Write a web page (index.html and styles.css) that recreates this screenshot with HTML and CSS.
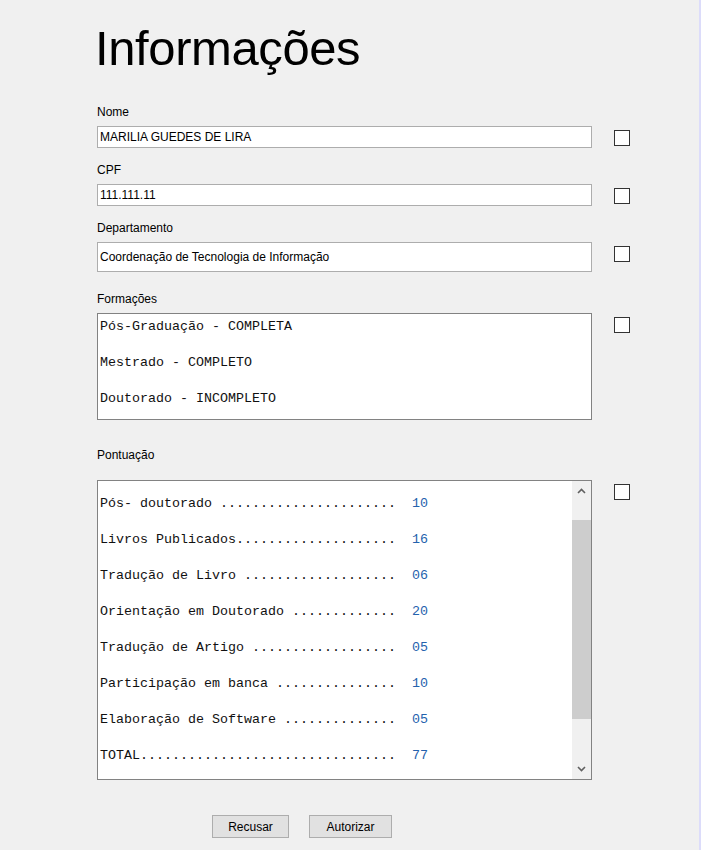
FILE: index.html
```html
<!DOCTYPE html>
<html lang="pt-BR">
<head>
<meta charset="utf-8">
<title>Informações</title>
<link rel="stylesheet" href="styles.css">
</head>
<body>
<div class="window">
  <h1 class="title">Informações</h1>

  <div class="field f-nome">
    <div class="label">Nome</div>
    <div class="row">
      <div class="input">MARILIA GUEDES DE LIRA</div>
      <input type="checkbox" class="check">
    </div>
  </div>

  <div class="field f-cpf">
    <div class="label">CPF</div>
    <div class="row">
      <div class="input">111.111.11</div>
      <input type="checkbox" class="check">
    </div>
  </div>

  <div class="field f-dep">
    <div class="label">Departamento</div>
    <div class="row">
      <div class="input tall">Coordenação de Tecnologia de Informação</div>
      <input type="checkbox" class="check">
    </div>
  </div>

  <div class="field f-form">
    <div class="label">Formações</div>
    <div class="row">
      <div class="area area-form">
        <p>Pós-Graduação - COMPLETA</p>
        <p>Mestrado - COMPLETO</p>
        <p>Doutorado - INCOMPLETO</p>
      </div>
      <input type="checkbox" class="check">
    </div>
  </div>

  <div class="field f-pont">
    <div class="label">Pontuação</div>
    <div class="row">
      <div class="area area-pont">
        <div class="lines">
          <p>Pós- doutorado ......................  <span class="num">10</span></p>
          <p>Livros Publicados....................  <span class="num">16</span></p>
          <p>Tradução de Livro ...................  <span class="num">06</span></p>
          <p>Orientação em Doutorado .............  <span class="num">20</span></p>
          <p>Tradução de Artigo ..................  <span class="num">05</span></p>
          <p>Participação em banca ...............  <span class="num">10</span></p>
          <p>Elaboração de Software ..............  <span class="num">05</span></p>
          <p>TOTAL................................  <span class="num">77</span></p>
        </div>
        <div class="scrollbar">
          <div class="sb-btn">
            <svg width="9" height="6" viewBox="0 0 9 6"><path d="M1 5 L4.5 1.5 L8 5" fill="none" stroke="#606060" stroke-width="1.6"/></svg>
          </div>
          <div class="sb-track"><div class="sb-thumb"></div></div>
          <div class="sb-btn">
            <svg width="9" height="6" viewBox="0 0 9 6"><path d="M1 1 L4.5 4.5 L8 1" fill="none" stroke="#606060" stroke-width="1.6"/></svg>
          </div>
        </div>
      </div>
      <input type="checkbox" class="check">
    </div>
  </div>

  <div class="buttons">
    <button class="btn btn-recusar">Recusar</button>
    <button class="btn btn-autorizar">Autorizar</button>
  </div>
</div>
</body>
</html>
```

FILE: styles.css
```css
html, body {
  margin: 0;
  padding: 0;
  background: #f0f0f0;
}

.window {
  box-sizing: border-box;
  width: 701px;
  min-height: 850px;
  padding: 24px 0 0 97px;
  border-right: 2px solid #dcdcfa;
  font-family: "Liberation Sans", Arial, sans-serif;
  font-size: 12px;
  color: #000;
}

.title {
  margin: 0 0 0 -2px;
  font-family: "Liberation Sans", Arial, sans-serif;
  font-weight: normal;
  font-size: 49px;
  line-height: 48px;
  letter-spacing: -0.4px;
  color: #000;
}

.field { display: flex; flex-direction: column; }
.f-nome { margin-top: 32px; }
.f-cpf { margin-top: 14px; }
.f-dep { margin-top: 14px; }
.f-form { margin-top: 18px; }
.f-pont { margin-top: 26px; }

.label {
  line-height: 16px;
  height: 16px;
  margin-bottom: 6px;
}
.f-form .label { margin-top: 1px; margin-bottom: 6px; }
.f-pont .label { margin-top: 1px; margin-bottom: 17px; }

.row {
  display: flex;
  align-items: flex-start;
}

.input {
  box-sizing: border-box;
  width: 495px;
  height: 22px;
  border: 1px solid #adadad;
  background: #fff;
  padding: 0 2px;
  display: flex;
  align-items: center;
  white-space: nowrap;
}
.input.tall { height: 30px; }

.check {
  appearance: none;
  -webkit-appearance: none;
  box-sizing: border-box;
  width: 16px;
  height: 16px;
  margin: 4px 0 0 22px;
  border: 1px solid #333;
  background: #fff;
  border-radius: 0;
}

.area {
  box-sizing: border-box;
  width: 495px;
  border: 1px solid #828282;
  background: #fff;
  font-family: "Liberation Mono", "Courier New", monospace;
  font-size: 13.33px;
  color: #111;
}
.area p {
  margin: 0;
  line-height: 16px;
  white-space: pre;
}
.area p + p { margin-top: 20px; }

.area-form {
  height: 107px;
  padding: 5px 2px 0 2px;
}

.area-pont {
  height: 300px;
  display: flex;
}
.lines {
  flex: 1;
  padding: 15px 2px 0 2px;
}
.num { color: #2462ad; }

.scrollbar {
  width: 19px;
  display: flex;
  flex-direction: column;
  background: #f0f0f0;
}
.sb-btn {
  height: 20px;
  display: flex;
  align-items: center;
  justify-content: center;
}
.sb-track { flex: 1; }
.sb-thumb {
  margin-top: 19px;
  height: 199px;
  background: #cdcdcd;
}

.buttons {
  display: flex;
  gap: 20px;
  margin: 35px 0 0 115px;
}
.btn {
  box-sizing: border-box;
  height: 23px;
  padding: 0;
  border: 1px solid #adadad;
  background: #e1e1e1;
  font-family: "Liberation Sans", Arial, sans-serif;
  font-size: 12px;
  color: #000;
  border-radius: 0;
}
.btn-recusar { width: 77px; }
.btn-autorizar { width: 83px; }
```
